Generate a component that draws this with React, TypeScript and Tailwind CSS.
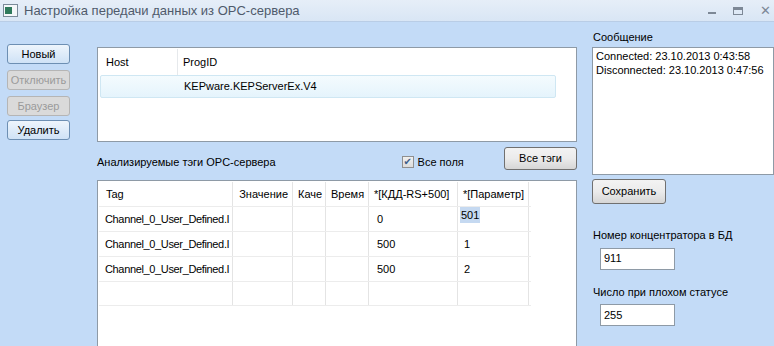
import React from "react";

const font = "font-['Tahoma','Liberation_Sans','DejaVu_Sans',sans-serif]";

const btnBlue =
  "flex items-center justify-center rounded-[3px] border border-[#6d8fb3] bg-gradient-to-b from-[#eef5fc] to-[#cfe2f6] text-[11px] text-black";
const btnGray =
  "flex items-center justify-center rounded-[3px] border border-[#707070] bg-gradient-to-b from-[#f3f3f3] via-[#ebebeb] to-[#d6d6d6] text-[11px] text-black";
const btnOff =
  "flex items-center justify-center rounded-[3px] border border-[#b5b5b5] bg-[#dadada] text-[11px] text-[#9a9a9a]";

const rows = [
  { kdd: "0", param: "501", sel: true },
  { kdd: "500", param: "1" },
  { kdd: "500", param: "2" },
  { kdd: "", param: "" },
];

const cols = [
  { w: "w-[134px]", label: "Tag" },
  { w: "w-[60px]", label: "Значение" },
  { w: "w-[33px]", label: "Каче" },
  { w: "w-[43px]", label: "Время" },
  { w: "w-[89px]", label: "*[КДД-RS+500]" },
  { w: "w-[71px]", label: "*[Параметр]" },
];

export default function App() {
  return (
    <div className={`w-[774px] h-[346px] overflow-hidden bg-[#c3dbf7] ${font} text-[11px] text-black`}>
      {/* title bar */}
      <div className="h-[22px] flex items-center bg-gradient-to-b from-[#e6eef8] to-[#d9e6f5] border-b border-[#b9cde6]">
        <div className="ml-[3px] w-[15px] h-[13px] border border-[#7a8a99] bg-[#f4f7f9] flex items-center justify-start pl-[1px]">
          <div className="w-[7px] h-[7px] bg-[#2f7a5c]" />
        </div>
        <span className="ml-[6px] text-[13px] text-[#4f5a6b]">Настройка передачи данных из OPC-сервера</span>
        <div className="ml-auto flex items-center gap-[17px] pr-[3px] text-[#7d8896]">
          <div className="w-[8px] h-[2px] bg-[#7d8896] mt-[4px]" />
          <div className="w-[10px] h-[8px] border border-[#7d8896] border-t-[3px]" />
          <span className="text-[13px] font-bold leading-none">✕</span>
        </div>
      </div>

      <div className="flex">
        {/* left buttons */}
        <div className="ml-[7px] mt-[22px] w-[63px] flex flex-col">
          <div className={`${btnBlue} h-[20px]`}>Новый</div>
          <div className={`${btnOff} h-[20px] mt-[6px]`}>Отключить</div>
          <div className={`${btnOff} h-[20px] mt-[6px]`}>Браузер</div>
          <div className={`${btnBlue} h-[20px] mt-[4px]`}>Удалить</div>
        </div>

        {/* middle */}
        <div className="ml-[27px] mt-[25px] w-[480px] flex flex-col">
          <div className="h-[95px] border border-[#8e9aa6] bg-white pl-[2px] pt-[1px]">
            <div className="flex h-[26px] items-center">
              <div className="w-[78px] h-full flex items-center pl-[6px] border-r border-[#e6e9ec]">Host</div>
              <div className="pl-[5px]">ProgID</div>
            </div>
            <div className="flex h-[23px] w-[456px] items-center rounded-[2px] border border-[#cfe7f3] bg-gradient-to-b from-[#f4fbfe] to-[#e5f4fc]">
              <div className="w-[78px]" />
              <div className="pl-[5px]">KEPware.KEPServerEx.V4</div>
            </div>
          </div>

          <div className="h-[38px] flex items-center">
            <span className="mt-[2px]">Анализируемые тэги OPC-сервера</span>
            <div className="ml-[126px] mt-[2px] flex items-center">
              <div className="w-[12px] h-[12px] border border-[#8f8f8f] bg-gradient-to-b from-[#f0f0f0] to-[#dcdcdc] flex items-center justify-center text-[10px] leading-none text-[#3c5d8a]">
                ✔
              </div>
              <span className="ml-[4px]">Все поля</span>
            </div>
            <div className={`${btnGray} ml-auto w-[73px] h-[23px] mt-[-5px]`}>Все тэги</div>
          </div>

          <div className="h-[170px] border border-[#8e9aa6] bg-white pl-[1px] pt-[1px]">
            <div className="flex h-[24px] items-center">
              {cols.map((c, i) => (
                <div
                  key={c.label}
                  className={`${c.w} h-full flex items-center border-r border-[#e4e4e4] overflow-hidden whitespace-nowrap ${
                    i === 0 ? "pl-[7px]" : i === 1 ? "justify-end pr-[4px]" : "pl-[5px]"
                  }`}
                >
                  {c.label}
                </div>
              ))}
            </div>
            {rows.map((r, ri) => (
              <div key={ri} className="flex h-[25px] w-[432px] border-t border-[#ececec] border-b-0 last:border-b">
                {cols.map((c, i) => (
                  <div
                    key={c.label}
                    className={`${c.w} h-full flex items-center border-r border-[#e4e4e4] whitespace-nowrap ${
                      i === 0 ? "pl-[6px] tracking-[-0.35px]" : i === 4 ? "pl-[8px]" : "pl-[6px]"
                    }`}
                  >
                    {i === 0 && r.kdd !== "" ? "Channel_0_User_Defined.I" : ""}
                    {i === 4 ? r.kdd : ""}
                    {i === 5 ? (
                      r.sel ? (
                        <span className="bg-[#c5d9f1] -ml-[4px] -mt-[8px] px-[1px]">{r.param}</span>
                      ) : (
                        r.param
                      )
                    ) : (
                      ""
                    )}
                  </div>
                ))}
              </div>
            ))}
          </div>
        </div>

        {/* right */}
        <div className="ml-[15px] w-[182px] flex flex-col">
          <div className="mt-[9px] ml-[1px] leading-[13px]">Сообщение</div>
          <div className="mt-[3px] h-[128px] border border-[#8e9aa6] bg-white pl-[3px] pt-[1px] leading-[14px]">
            <div>Connected: 23.10.2013 0:43:58</div>
            <div>Disconnected: 23.10.2013 0:47:56</div>
          </div>
          <div className={`${btnGray} mt-[4px] w-[74px] h-[25px]`}>Сохранить</div>
          <div className="mt-[23px] ml-[1px]">Номер концентратора в БД</div>
          <div className="mt-[4px] ml-[8px] w-[75px] h-[22px] border border-[#8e9aa6] bg-white pl-[3px] flex items-center">911</div>
          <div className="mt-[14px] ml-[1px]">Число при плохом статусе</div>
          <div className="mt-[4px] ml-[8px] w-[75px] h-[22px] border border-[#8e9aa6] bg-white pl-[3px] flex items-center">255</div>
        </div>
      </div>
    </div>
  );
}
